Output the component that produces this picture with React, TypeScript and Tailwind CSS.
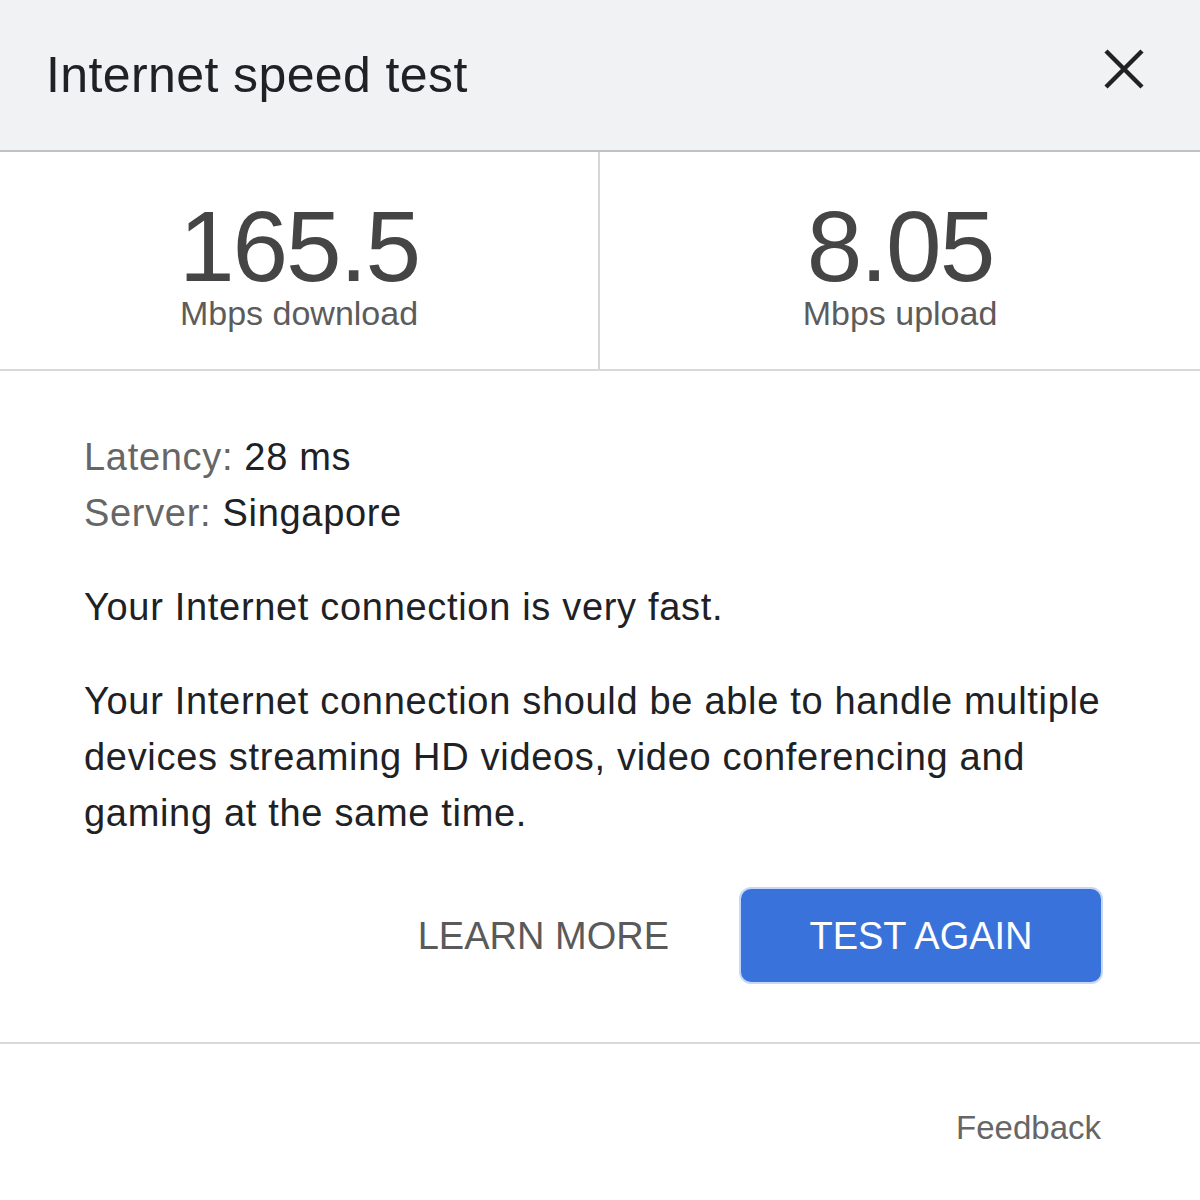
const font = { fontFamily: '"Liberation Sans", Arial, Helvetica, sans-serif' };

function Stat({ value, label, divider }: { value: string; label: string; divider?: boolean }) {
  return (
    <div className={`flex flex-col items-center pt-[46px] ${divider ? "border-r-2 border-[#d6d6d6]" : ""}`}>
      <div className="text-[100px] leading-[96px] tracking-[-0.02em] text-[#454545]">{value}</div>
      <div className="text-[34px] leading-[38px] text-[#5c5c5c]">{label}</div>
    </div>
  );
}

export default function App() {
  return (
    <div className="min-h-screen w-[1200px] bg-white" style={font}>
      <header className="flex h-[152px] items-center justify-between border-b-2 border-[#c2c2c2] bg-[#f1f2f4] pl-[46px] pr-[56px]">
        <h1 className="text-[50px] leading-none tracking-[0.008em] text-[#202124]">Internet speed test</h1>
        <svg className="-mt-3" width="40" height="40" viewBox="0 0 40 40" fill="none" stroke="#222" strokeWidth="4.5">
          <path d="M2 2 L38 38 M38 2 L2 38" />
        </svg>
      </header>

      <section className="grid h-[219px] grid-cols-2 border-b-2 border-[#d9d9d9]">
        <Stat value="165.5" label="Mbps download" divider />
        <Stat value="8.05" label="Mbps upload" />
      </section>

      <section className="pb-[58px] pl-[84px] pr-[97px] pt-[58px] text-[38px] leading-[56px] tracking-[0.018em] text-[#202124]">
        <div>
          <span className="text-[#666]">Latency:</span> 28 ms
        </div>
        <div>
          <span className="text-[#666]">Server:</span> Singapore
        </div>
        <p className="mt-[38px]">Your Internet connection is very fast.</p>
        <p className="mt-[38px] whitespace-nowrap">
          Your Internet connection should be able to handle multiple
          <br />
          devices streaming HD videos, video conferencing and
          <br />
          gaming at the same time.
        </p>
        <div className="mt-[46px] flex items-center justify-end gap-[70px]">
          <button className="text-[38px] leading-none tracking-normal text-[#5a5a5a]">LEARN MORE</button>
          <button className="h-[97px] w-[364px] rounded-[12px] border-2 border-[#c6d8f5] bg-[#3a72dc] text-[38px] leading-none tracking-normal text-white">
            TEST AGAIN
          </button>
        </div>
      </section>

      <footer className="flex justify-end border-t-2 border-[#d9d9d9] pr-[99px] pt-[64px]">
        <a className="text-[33px] leading-[40px] text-[#666]">Feedback</a>
      </footer>
    </div>
  );
}
